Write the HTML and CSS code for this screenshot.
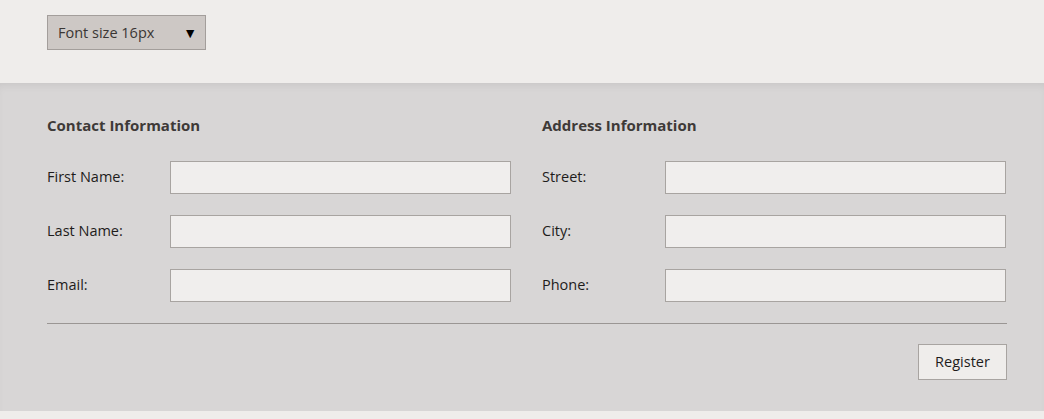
FILE: index.html
```html
<!DOCTYPE html>
<html>
<head>
<meta charset="utf-8">
<link rel="stylesheet" href="styles.css">
</head>
<body>
<header class="toolbar">
  <div class="select">
    <span class="select-text">Font size 16px</span>
    <span class="select-arrow">&#9660;</span>
  </div>
</header>
<main class="panel">
  <div class="columns">
    <section class="col">
      <h2 class="heading">Contact Information</h2>
      <div class="row"><label class="label">First Name:</label><div class="input"></div></div>
      <div class="row"><label class="label">Last Name:</label><div class="input"></div></div>
      <div class="row"><label class="label">Email:</label><div class="input"></div></div>
    </section>
    <section class="col">
      <h2 class="heading">Address Information</h2>
      <div class="row"><label class="label">Street:</label><div class="input"></div></div>
      <div class="row"><label class="label">City:</label><div class="input"></div></div>
      <div class="row"><label class="label">Phone:</label><div class="input"></div></div>
    </section>
  </div>
  <div class="rule"></div>
  <div class="actions"><button class="button">Register</button></div>
</main>
<footer class="bottom"></footer>
</body>
</html>
```
FILE: styles.css
```css
html, body {
  margin: 0;
  padding: 0;
  background: #efedeb;
  font-family: "Open Sans", "Noto Sans", sans-serif;
  color: #222;
}
.toolbar {
  height: 83px;
  box-sizing: border-box;
  padding: 15px 0 0 47px;
  background: #efedeb;
}
.select {
  width: 159px;
  height: 35px;
  box-sizing: border-box;
  border: 1px solid #a39e9b;
  background: #cdc8c5;
  display: flex;
  align-items: center;
  justify-content: space-between;
  padding: 0 8px 0 10px;
  font-size: 14.5px;
  color: #3a3634;
}
.select-arrow { font-size: 14px; color: #000; }
.panel {
  height: 328px;
  box-sizing: border-box;
  background: #d8d6d6;
  box-shadow: inset 0 6px 8px -4px rgba(0,0,0,0.08);
  padding: 31px 37px 0 47px;
}
.columns {
  display: flex;
  gap: 31px;
}
.col {
  width: 464px;
}
.heading {
  margin: 0 0 25px 0;
  height: 22px;
  line-height: 22px;
  font-size: 15px;
  font-weight: 700;
  color: #3e3a38;
}
.row {
  display: flex;
  align-items: center;
  height: 33px;
  margin-bottom: 21px;
}
.label {
  width: 123px;
  font-size: 14.5px;
  line-height: 20px;
  padding-bottom: 2px;
  color: #1e1c1b;
}
.input {
  width: 341px;
  height: 33px;
  box-sizing: border-box;
  border: 1px solid #a8a4a1;
  background: #f0eeed;
}
.rule {
  height: 1px;
  background: #9a9694;
}
.actions {
  display: flex;
  justify-content: flex-end;
  margin-top: 20px;
}
.button {
  width: 89px;
  height: 36px;
  box-sizing: border-box;
  border: 1px solid #a8a4a1;
  background: #efedeb;
  font-family: "Open Sans", "Noto Sans", sans-serif;
  font-size: 14.5px;
  color: #1e1c1b;
  padding: 0 0 2px 0;
}
.bottom {
  height: 8px;
  background: #efedeb;
}
```
